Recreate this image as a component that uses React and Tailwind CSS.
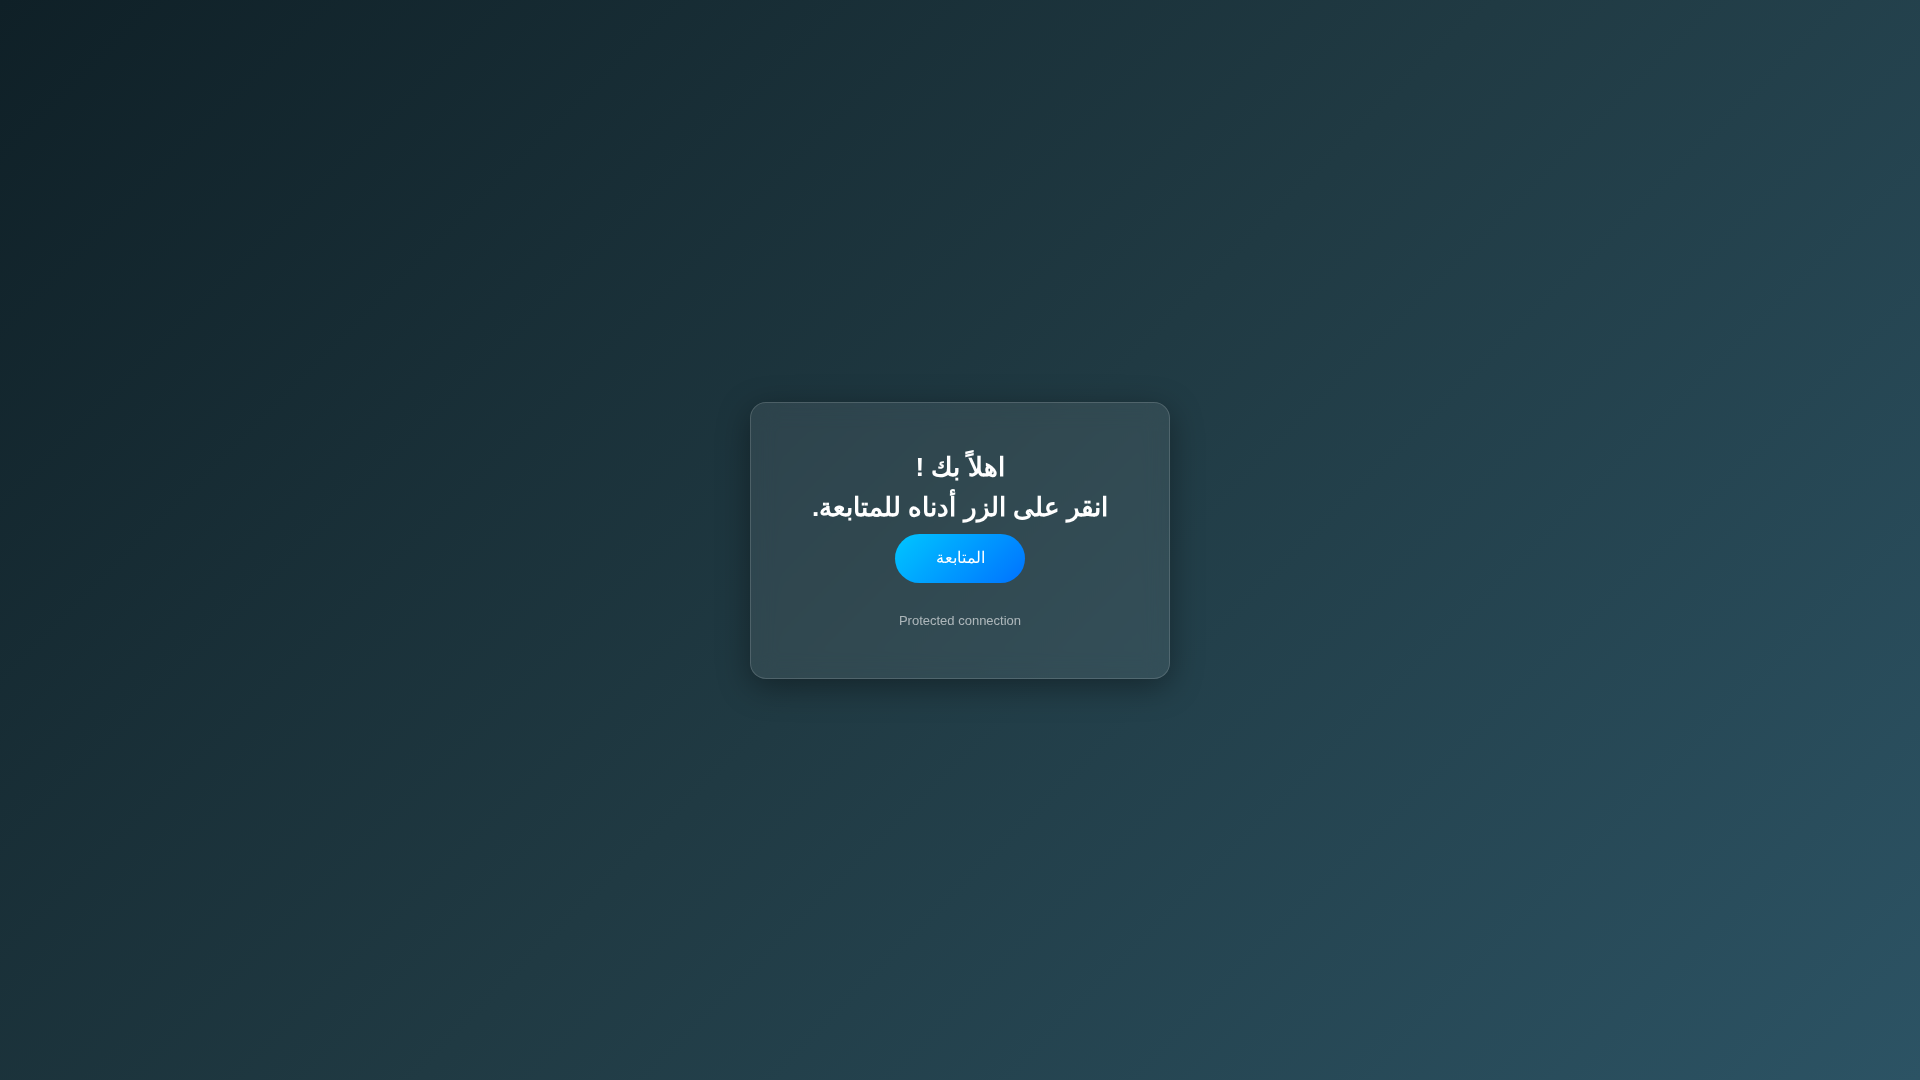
import React from "react";

function App() {
  return (
    <div className="w-screen h-screen bg-[linear-gradient(135deg,#0f2027,#203a43,#2c5364)] flex items-center justify-center font-['Liberation_Sans',sans-serif]">
      <div className="w-[420px] h-[277px] rounded-2xl border border-white/15 bg-white/[0.08] shadow-[0_8px_32px_rgba(0,0,0,0.37)] backdrop-blur-md px-10 pt-[44px] text-center">
        <h2 dir="rtl" className="text-[26px] leading-[40px] font-bold text-white">
          اهلاً بك !
          <br />
          انقر على الزر أدناه للمتابعة.
        </h2>
        <button className="mt-[7px] w-[130px] h-[49px] rounded-full bg-[linear-gradient(135deg,#00c6ff,#0072ff)] text-white text-[16px]">
          المتابعة
        </button>
        <p className="mt-[28px] text-[13px] text-white/60">Protected connection</p>
      </div>
    </div>
  );
}

export default App;
